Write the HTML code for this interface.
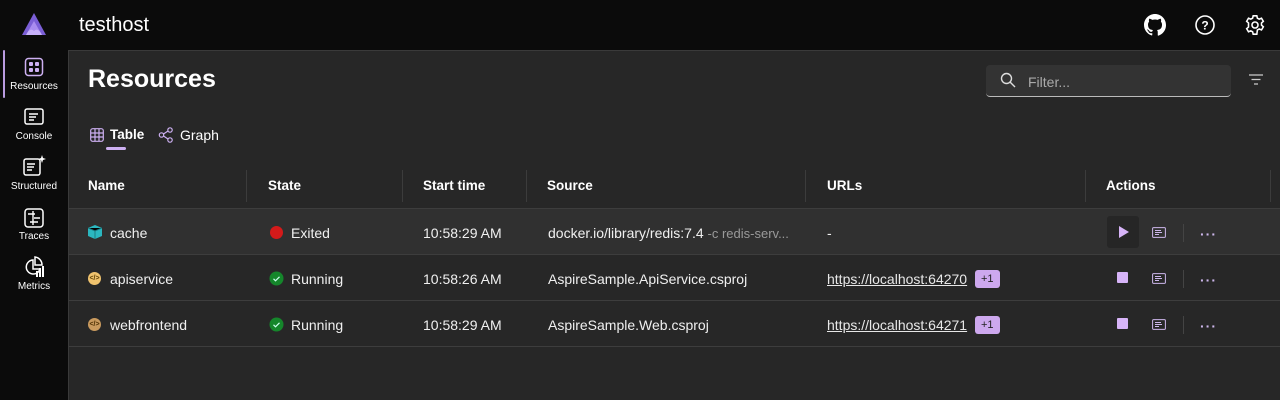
<!DOCTYPE html>
<html><head><style>
*{box-sizing:border-box;margin:0;padding:0}
body{width:1280px;height:400px;background:#0b0b0b;font-family:"Liberation Sans",sans-serif;color:#fff;position:relative;overflow:hidden;font-size:14px}
.abs{position:absolute}
.main{left:68px;top:50px;width:1212px;height:350px;background:#272727;border-top:1px solid #3a3a3a;border-left:1px solid #3a3a3a}
.nav{font-size:10px;color:#fff;text-align:center;width:68px;left:0}
.th{top:178px;font-weight:bold;font-size:13.5px}
.sep{width:1px;height:32px;top:170px;background:#3c3c3c}
.row{left:69px;width:1211px;height:46px;border-bottom:1px solid #3d3d3d}
.c{font-size:14px;color:#f0f0f0}
.link{color:#e8e8e8;text-decoration:underline}
.badge{background:#cda8ee;color:#222;font-size:11px;padding:3px 6px;border-radius:3px}
.stop{width:11px;height:11px;background:#d7b4f8;border-radius:1px}
.dots{color:#cdb7ec;font-size:14px;letter-spacing:1px;font-weight:bold}
.vs{width:1px;height:18px;background:#444}
</style></head><body>
<svg class="abs" style="left:22px;top:13px" width="24" height="22" viewBox="0 0 24 22"><path d="M12 0L24 22H0Z" fill="#7b5fd6"/><path d="M12 8L20 22H4Z" fill="#a98cf0"/><path d="M4 22 Q8 14 12 18 Q16 14 20 22Z" fill="#c7b1fa"/></svg>
<div class="abs" style="left:79px;top:14px;font-size:20px">testhost</div>
<svg class="abs" style="left:1144px;top:14px" width="22" height="22" viewBox="0 0 16 16"><path fill="#fff" d="M8 0C3.58 0 0 3.58 0 8c0 3.540 2.29 6.53 5.47 7.59.4.07.55-.17.55-.38v-1.33c-2.23.48-2.7-.95-2.7-.95-.36-.92-.89-1.170-.89-1.17-.73-.5.05-.49.05-.49.8.06 1.23.83 1.23.83.72 1.22 1.87.87 2.33.66.07-.52.28-.87.51-1.07-1.78-.2-3.64-.89-3.64-3.95 0-.87.31-1.59.82-2.15-.08-.2-.36-1.02.08-2.12 0 0 .67-.21 2.2.82a7.6 7.6 0 014 0c1.53-1.04 2.2-.82 2.2-.82.44 1.1.16 1.92.08 2.12.51.56.82 1.27.82 2.15 0 3.07-1.87 3.75-3.65 3.95.29.25.54.73.54 1.48v2.2c0 .21.15.46.55.38A8.01 8.01 0 0016 8c0-4.42-3.58-8-8-8z"/></svg>
<svg class="abs" style="left:1195px;top:15px" width="20" height="20" viewBox="0 0 20 20"><circle cx="10" cy="10" r="9" fill="none" stroke="#fff" stroke-width="1.6"/><text x="10" y="14.5" text-anchor="middle" font-size="12" font-family="Liberation Sans" fill="#fff" font-weight="bold">?</text></svg>
<svg class="abs" style="left:1244px;top:14px" width="22" height="22" viewBox="0 0 24 24"><path fill="none" stroke="#fff" stroke-width="1.7" d="M10 2h4l.6 2.6 2 1 2.5-1 2 3.4-2 1.8v2.4l2 1.8-2 3.4-2.5-1-2 1L14 22h-4l-.6-2.6-2-1-2.5 1-2-3.4 2-1.8V9.8l-2-1.8 2-3.4 2.5 1 2-1z"/><circle cx="12" cy="12" r="3.3" fill="none" stroke="#fff" stroke-width="1.7"/></svg>
<div class="abs" style="left:3px;top:50px;width:2px;height:48px;background:#b99be0;border-radius:1px"></div>
<svg class="abs" style="left:24px;top:57px" width="20" height="20" viewBox="0 0 20 20"><rect x="1.5" y="1.5" width="17" height="17" rx="3" fill="none" stroke="#cdb0f2" stroke-width="1.5"/><rect x="5" y="5" width="4" height="4" rx="1" fill="#cdb0f2"/><rect x="11" y="5" width="4" height="4" rx="1" fill="#cdb0f2"/><rect x="5" y="11" width="4" height="4" rx="1" fill="#cdb0f2"/><rect x="11" y="11" width="4" height="4" rx="1" fill="#cdb0f2"/></svg>
<div class="abs nav" style="top:81px">Resources</div>
<svg class="abs" style="left:24px;top:108px" width="20" height="18" viewBox="0 0 20 18"><rect x="1" y="1" width="18" height="15" rx="2" fill="none" stroke="#fff" stroke-width="1.5"/><path d="M5 6h9M5 9h7M5 12h5" stroke="#fff" stroke-width="1.4"/></svg>
<div class="abs nav" style="top:131px">Console</div>
<svg class="abs" style="left:23px;top:155px" width="24" height="22" viewBox="0 0 24 22"><rect x="1" y="4" width="16" height="16" rx="2" fill="none" stroke="#fff" stroke-width="1.5"/><path d="M4 9h8M4 12h7M4 15h5" stroke="#fff" stroke-width="1.4"/><path d="M19 0l1 3 3 1-3 1-1 3-1-3-3-1 3-1z" fill="#fff"/></svg>
<div class="abs nav" style="top:181px">Structured</div>
<svg class="abs" style="left:24px;top:208px" width="20" height="20" viewBox="0 0 20 20"><rect x="1" y="1" width="18" height="18" rx="3" fill="none" stroke="#fff" stroke-width="1.5"/><path d="M4 6h7M10 10h6M6 14h8M9 3v14" stroke="#fff" stroke-width="1.4"/></svg>
<div class="abs nav" style="top:231px">Traces</div>
<svg class="abs" style="left:24px;top:256px" width="22" height="22" viewBox="0 0 22 22"><path d="M9 4a7 7 0 107 9H9z" fill="none" stroke="#fff" stroke-width="1.5"/><path d="M11 1v8h7a8 8 0 00-7-8z" fill="none" stroke="#fff" stroke-width="1.5"/><rect x="12" y="15" width="2" height="6" fill="#fff"/><rect x="15" y="12" width="2" height="9" fill="#fff"/><rect x="18" y="10" width="2" height="11" fill="#fff"/></svg>
<div class="abs nav" style="top:281px">Metrics</div>
<div class="abs main"></div>
<div class="abs" style="left:88px;top:65px;font-size:25px;font-weight:bold">Resources</div>
<div class="abs" style="left:986px;top:65px;width:245px;height:32px;background:#333;border-radius:4px;border-bottom:1px solid #bbb"></div>
<svg class="abs" style="left:1000px;top:72px" width="16" height="16" viewBox="0 0 16 16"><circle cx="6.5" cy="6.5" r="5" fill="none" stroke="#ddd" stroke-width="1.4"/><path d="M10 10l5 5" stroke="#ddd" stroke-width="1.4"/></svg>
<div class="abs" style="left:1028px;top:74px;color:#aaa;font-size:14px">Filter...</div>
<svg class="abs" style="left:1248px;top:74px" width="16" height="12" viewBox="0 0 16 12"><path d="M1 1h14M3.5 5.5h9M6 10h4" stroke="#ccc" stroke-width="1.2"/></svg>
<svg class="abs" style="left:90px;top:128px" width="14" height="14" viewBox="0 0 14 14"><rect x="0.7" y="0.7" width="12.6" height="12.6" rx="2" fill="none" stroke="#cdb0f2" stroke-width="1.2"/><path d="M5 1v12M9 1v12M1 5h12M1 9h12" stroke="#cdb0f2" stroke-width="1.2"/></svg>
<div class="abs" style="left:110px;top:127px;font-weight:bold;font-size:13.5px">Table</div>
<div class="abs" style="left:106px;top:147px;width:20px;height:3px;background:#cdb0f2;border-radius:2px"></div>
<svg class="abs" style="left:158px;top:127px" width="16" height="16" viewBox="0 0 16 16"><circle cx="3.5" cy="8" r="2.2" fill="none" stroke="#cdb0f2" stroke-width="1.2"/><circle cx="12" cy="3" r="2.2" fill="none" stroke="#cdb0f2" stroke-width="1.2"/><circle cx="12" cy="13" r="2.2" fill="none" stroke="#cdb0f2" stroke-width="1.2"/><path d="M5.5 7l4.5-3M5.5 9l4.5 3" stroke="#cdb0f2" stroke-width="1.2"/></svg>
<div class="abs" style="left:180px;top:127px">Graph</div>
<div class="abs" style="left:69px;top:208px;width:1211px;height:1px;background:#3d3d3d"></div>
<div class="abs th" style="left:88px">Name</div>
<div class="abs sep" style="left:246px"></div><div class="abs th" style="left:268px">State</div>
<div class="abs sep" style="left:402px"></div><div class="abs th" style="left:423px">Start time</div>
<div class="abs sep" style="left:526px"></div><div class="abs th" style="left:547px">Source</div>
<div class="abs sep" style="left:805px"></div><div class="abs th" style="left:827px">URLs</div>
<div class="abs sep" style="left:1085px"></div><div class="abs th" style="left:1106px">Actions</div>
<div class="abs sep" style="left:1270px"></div>
<div class="abs row" style="top:209px;background:#303030"></div>
<div class="abs row" style="top:255px"></div>
<div class="abs row" style="top:301px"></div>
<svg class="abs" style="left:88px;top:225px" width="14" height="14" viewBox="0 0 14 14"><path d="M7 0l7 3v8l-7 3-7-3V3z" fill="#2bb7c0"/><path d="M0 3l7 3 7-3M7 6v8" stroke="#1b7c83" stroke-width="1"/></svg>
<div class="abs c" style="left:110px;top:225px">cache</div>
<div class="abs" style="left:270px;top:226px;width:13px;height:13px;border-radius:50%;background:#d41a1a"></div>
<div class="abs c" style="left:291px;top:225px">Exited</div>
<div class="abs c" style="left:423px;top:225px">10:58:29 AM</div>
<div class="abs c" style="left:548px;top:225px">docker.io/library/redis:7.4 <span style="color:#999;font-size:13px">-c redis-serv...</span></div>
<div class="abs c" style="left:827px;top:225px">-</div>
<div class="abs" style="left:1107px;top:216px;width:32px;height:32px;background:#262626;border-radius:3px"></div>
<svg class="abs" style="left:1118px;top:225px" width="12" height="14" viewBox="0 0 12 14"><path d="M1 1l10 6-10 6z" fill="#d7b4f8"/></svg>
<div class="abs" style="left:88px;top:272px;width:13px;height:13px;border-radius:50%;background:#f0c36e;color:#5a3d00;font-size:7px;text-align:center;line-height:13px;font-weight:bold">&lt;/&gt;</div>
<div class="abs c" style="left:110px;top:271px">apiservice</div>
<svg class="abs" style="left:269px;top:271px" width="15" height="15" viewBox="0 0 15 15"><circle cx="7.5" cy="7.5" r="7" fill="#15862b"/><path d="M4.5 7.8l2 2 4-4" stroke="#cfe" stroke-width="1.2" fill="none"/></svg>
<div class="abs c" style="left:291px;top:271px">Running</div>
<div class="abs c" style="left:423px;top:271px">10:58:26 AM</div>
<div class="abs c" style="left:548px;top:271px">AspireSample.ApiService.csproj</div>
<div class="abs c link" style="left:827px;top:271px">https://localhost:64270</div>
<div class="abs badge" style="left:975px;top:270px">+1</div>
<div class="abs" style="left:88px;top:318px;width:13px;height:13px;border-radius:50%;background:#c99a5e;color:#4a2d00;font-size:7px;text-align:center;line-height:13px;font-weight:bold">&lt;/&gt;</div>
<div class="abs c" style="left:110px;top:317px">webfrontend</div>
<svg class="abs" style="left:269px;top:317px" width="15" height="15" viewBox="0 0 15 15"><circle cx="7.5" cy="7.5" r="7" fill="#15862b"/><path d="M4.5 7.8l2 2 4-4" stroke="#cfe" stroke-width="1.2" fill="none"/></svg>
<div class="abs c" style="left:291px;top:317px">Running</div>
<div class="abs c" style="left:423px;top:317px">10:58:29 AM</div>
<div class="abs c" style="left:548px;top:317px">AspireSample.Web.csproj</div>
<div class="abs c link" style="left:827px;top:317px">https://localhost:64271</div>
<div class="abs badge" style="left:975px;top:316px">+1</div>
<div class="abs stop" style="left:1117px;top:272px"></div>
<div class="abs stop" style="left:1117px;top:318px"></div>
<svg class="abs" style="left:1152px;top:227px" width="14" height="11" viewBox="0 0 14 11"><rect x="0.6" y="0.6" width="12.8" height="9.8" rx="1" fill="none" stroke="#cdb7ec" stroke-width="1"/><path d="M3 3.5h6M3 5.5h7M3 7.5h4" stroke="#cdb7ec" stroke-width="1"/></svg>
<svg class="abs" style="left:1152px;top:273px" width="14" height="11" viewBox="0 0 14 11"><rect x="0.6" y="0.6" width="12.8" height="9.8" rx="1" fill="none" stroke="#cdb7ec" stroke-width="1"/><path d="M3 3.5h6M3 5.5h7M3 7.5h4" stroke="#cdb7ec" stroke-width="1"/></svg>
<svg class="abs" style="left:1152px;top:319px" width="14" height="11" viewBox="0 0 14 11"><rect x="0.6" y="0.6" width="12.8" height="9.8" rx="1" fill="none" stroke="#cdb7ec" stroke-width="1"/><path d="M3 3.5h6M3 5.5h7M3 7.5h4" stroke="#cdb7ec" stroke-width="1"/></svg>
<div class="abs vs" style="left:1183px;top:224px"></div>
<div class="abs vs" style="left:1183px;top:270px"></div>
<div class="abs vs" style="left:1183px;top:316px"></div>
<div class="abs dots" style="left:1200px;top:226px">···</div>
<div class="abs dots" style="left:1200px;top:272px">···</div>
<div class="abs dots" style="left:1200px;top:318px">···</div>
</body></html>
